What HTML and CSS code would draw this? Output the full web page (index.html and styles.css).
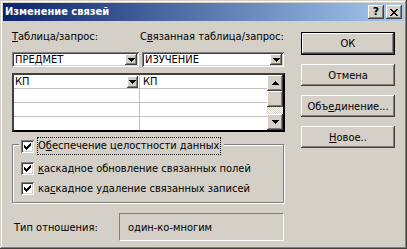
FILE: index.html
```html
<!DOCTYPE html>
<html lang="ru">
<head>
  <meta charset="UTF-8">
  <title>Изменение связей</title>
  <link rel="stylesheet" href="styles.css">
</head>
<body>

  <div class="window">
    <!-- title bar -->
    <div class="titlebar">
      <span class="title">Изменение связей</span>
      <span class="cbtn help">?</span>
      <span class="cbtn close">
        <svg width="8" height="7" viewBox="0 0 8 7"><path d="M0 0h2v1h-2z M6 0h2v1h-2z M1 1h2v1h-2z M5 1h2v1h-2z M2 2h4v1h-4z M3 3h2v1h-2z M2 4h4v1h-4z M1 5h2v1h-2z M5 5h2v1h-2z M0 6h2v1h-2z M6 6h2v1h-2z"/></svg>
      </span>
    </div>

    <div class="client">
      <div class="main">
        <div class="labels">
          <span class="lab1"><u>Т</u>аблица/запрос:</span>
          <span>С<u>в</u>язанная таблица/запрос:</span>
        </div>

        <div class="combos">
          <div class="combo c1">
            <span class="val">ПРЕДМЕТ</span>
            <span class="arrow"><svg width="7" height="4" viewBox="0 0 7 4"><path d="M0 0h7v1h-1v1h-1v1h-1v1h-1v-1h-1v-1h-1v-1h-1z"/></svg></span>
          </div>
          <div class="combo c2">
            <span class="val">ИЗУЧЕНИЕ</span>
            <span class="arrow"><svg width="7" height="4" viewBox="0 0 7 4"><path d="M0 0h7v1h-1v1h-1v1h-1v1h-1v-1h-1v-1h-1v-1h-1z"/></svg></span>
          </div>
        </div>

        <!-- field pairs -->
        <div class="grid">
          <div class="rows">
            <div class="row">
              <div class="cell left">КП<span class="cell-arrow"><svg width="7" height="4" viewBox="0 0 7 4"><path d="M0 0h7v1h-1v1h-1v1h-1v1h-1v-1h-1v-1h-1v-1h-1z"/></svg></span></div>
              <div class="cell">КП</div>
            </div>
            <div class="row"><div class="cell left"></div><div class="cell"></div></div>
            <div class="row"><div class="cell left"></div><div class="cell"></div></div>
            <div class="row"><div class="cell left"></div><div class="cell"></div></div>
          </div>
          <div class="vscroll">
            <span class="sbtn"><svg width="7" height="4" viewBox="0 0 7 4"><path d="M3 0h1v1h1v1h1v1h1v1h-7v-1h1v-1h1v-1h1z"/></svg></span>
            <span class="thumb"></span>
            <span class="track"></span>
            <span class="sbtn"><svg width="7" height="4" viewBox="0 0 7 4"><path d="M0 0h7v1h-1v1h-1v1h-1v1h-1v-1h-1v-1h-1v-1h-1z"/></svg></span>
          </div>
        </div>

        <div class="group">
          <div class="check first">
            <span class="box"><svg width="7" height="7" viewBox="0 0 7 7"><path d="M0 2h1v3h-1z M1 3h1v3h-1z M2 4h1v3h-1z M3 3h1v3h-1z M4 2h1v3h-1z M5 1h1v3h-1z M6 0h1v3h-1z"/></svg></span>
            <span class="focus">О<u>б</u>еспечение целостности данных</span>
          </div>
          <div class="check">
            <span class="box"><svg width="7" height="7" viewBox="0 0 7 7"><path d="M0 2h1v3h-1z M1 3h1v3h-1z M2 4h1v3h-1z M3 3h1v3h-1z M4 2h1v3h-1z M5 1h1v3h-1z M6 0h1v3h-1z"/></svg></span>
            <span><u>к</u>аскадное обновление связанных полей</span>
          </div>
          <div class="check">
            <span class="box"><svg width="7" height="7" viewBox="0 0 7 7"><path d="M0 2h1v3h-1z M1 3h1v3h-1z M2 4h1v3h-1z M3 3h1v3h-1z M4 2h1v3h-1z M5 1h1v3h-1z M6 0h1v3h-1z"/></svg></span>
            <span>ка<u>с</u>кадное удаление связанных записей</span>
          </div>
        </div>

        <div class="reltype">
          <span class="rel-label">Тип отношения:</span>
          <span class="rel-value">один-ко-многим</span>
        </div>
      </div>

      <div class="buttons">
        <div class="btn default">ОК</div>
        <div class="btn">Отмена</div>
        <div class="btn">Объ<u>е</u>динение...</div>
        <div class="btn"><u>Н</u>овое..</div>
      </div>
    </div>
  </div>

</body>
</html>
```

FILE: styles.css
```css
* {
  box-sizing: border-box;
}
body {
  margin: 0;
  font-family: "DejaVu Sans Condensed", "Liberation Sans", sans-serif;
  font-size: 11px;
  color: #000;
  background: #d4d0c8;
}
u {
  text-decoration: underline;
  text-underline-offset: 1px;
}
.window {
  width: 407px;
  height: 249px;
  padding: 3px;
  background: #d4d0c8;
  box-shadow: inset -1px -1px #404040, inset 1px 1px #d4d0c8, inset -2px -2px #808080, inset 2px 2px #fff;
  display: flex;
  flex-direction: column;
}

/* title bar */
.titlebar {
  height: 18px;
  display: flex;
  align-items: center;
  padding: 0 2px 0 2px;
  background: linear-gradient(to right, #0a246a, #a6caf0);
}
.title {
  flex: 1;
  color: #fff;
  font-weight: bold;
  line-height: 18px;
}
.cbtn {
  width: 16px;
  height: 14px;
  display: flex;
  align-items: center;
  justify-content: center;
  background: #d4d0c8;
  box-shadow: inset -1px -1px #404040, inset 1px 1px #fff, inset -2px -2px #808080;
  font-weight: bold;
  font-family: "DejaVu Sans", sans-serif;
  font-size: 11px;
  line-height: 14px;
}
.cbtn.close {
  margin-left: 2px;
  padding-right: 1px;
}

/* client area */
.client {
  flex: 1;
  display: flex;
  justify-content: space-between;
  padding: 9px 9px 0 9px;
}
.main {
  width: 273px;
}
.labels {
  display: flex;
  height: 13px;
  line-height: 13px;
}
.lab1 {
  width: 128px;
}

.combos {
  display: flex;
  gap: 3px;
  margin-top: 9px;
}
.combo {
  height: 15px;
  display: flex;
  align-items: center;
  background: #fff;
  padding: 2px;
  box-shadow: inset 1px 1px #808080, inset -1px -1px #fff, inset 2px 2px #404040, inset -2px -2px #d4d0c8;
}
.combo.c1 {
  width: 127px;
}
.combo.c2 {
  width: 142px;
}
.combo .val {
  flex: 1;
  padding-left: 1px;
  line-height: 11px;
}
.arrow,
.cell-arrow,
.sbtn {
  display: flex;
  align-items: center;
  justify-content: center;
  background: #d4d0c8;
  box-shadow: inset -1px -1px #404040, inset 1px 1px #fff, inset -2px -2px #808080;
}
.arrow {
  width: 12px;
  height: 11px;
}

/* field grid */
.grid {
  margin-top: 6px;
  height: 59px;
  display: flex;
  background: #fff;
  border: 2px solid #000;
  border-color: #404040 #000 #000 #404040;
  overflow: hidden;
}
.rows {
  flex: 1;
}
.row {
  display: flex;
  height: 14px;
  border-bottom: 1px solid #c0c0c0;
}
.cell {
  flex: 1;
  display: flex;
  align-items: center;
  padding-left: 3px;
  line-height: 13px;
}
.cell.left {
  flex: none;
  width: 126px;
  padding-left: 1px;
  border-right: 1px solid #c0c0c0;
}
.cell-arrow {
  margin-left: auto;
  margin-right: 1px;
  width: 11px;
  height: 12px;
}
.vscroll {
  width: 16px;
  display: flex;
  flex-direction: column;
}
.sbtn {
  width: 16px;
  height: 16px;
}
.thumb {
  height: 16px;
  background: #d4d0c8;
  box-shadow: inset -1px -1px #404040, inset 1px 1px #fff, inset -2px -2px #808080;
}
.track {
  flex: 1;
  background: repeating-conic-gradient(#fff 0 25%, #d4d0c8 0 50%) 0 0 / 2px 2px;
}

/* group box */
.group {
  margin-top: 12px;
  width: 272px;
  height: 59px;
  border: 1px solid #808080;
  box-shadow: inset 1px 1px #fff, 1px 1px #fff;
}
.check {
  display: flex;
  align-items: center;
  height: 20px;
  padding-left: 8px;
}
.check.first {
  margin: -8px 0 3px 6px;
  padding: 0 3px 0 2px;
  width: max-content;
  height: 18px;
  background: #d4d0c8;
}
.box {
  width: 13px;
  height: 13px;
  margin-right: 4px;
  display: flex;
  align-items: center;
  justify-content: center;
  background: #fff;
  box-shadow: inset 1px 1px #808080, inset -1px -1px #fff, inset 2px 2px #404040, inset -2px -2px #d4d0c8;
}
.check.first .box {
  margin-right: 3px;
}
.focus {
  border: 1px dotted #000;
  padding: 0 1px 0 0;
  line-height: 16px;
}

/* relationship type */
.reltype {
  margin-top: 10px;
  display: flex;
  align-items: center;
  padding-left: 2px;
}
.rel-label {
  width: 105px;
}
.rel-value {
  width: 165px;
  height: 28px;
  display: flex;
  align-items: center;
  padding-left: 8px;
  border: 1px solid;
  border-color: #808080 #fff #fff #808080;
}

/* buttons */
.buttons {
  width: 94px;
  margin-top: 2px;
  display: flex;
  flex-direction: column;
  gap: 9px;
}
.btn {
  height: 22px;
  display: flex;
  align-items: center;
  justify-content: center;
  background: #d4d0c8;
  box-shadow: inset -1px -1px #404040, inset 1px 1px #fff, inset -2px -2px #808080;
}
.btn.default {
  height: 23px;
  border: 1px solid #000;
}
```
